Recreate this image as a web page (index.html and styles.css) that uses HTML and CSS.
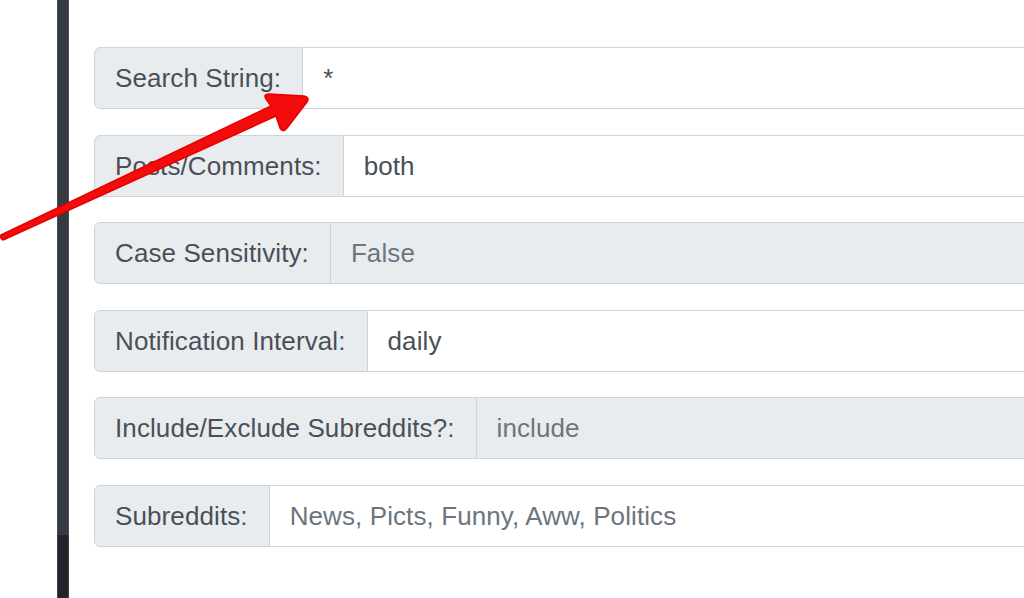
FILE: index.html
```html
<!DOCTYPE html>
<html>
<head>
<meta charset="utf-8">
<link rel="stylesheet" href="styles.css">
</head>
<body>
<div class="page">
  <div class="gutter"></div>
  <div class="sidebar"><div class="sidebar-top"></div><div class="sidebar-bottom"></div></div>
  <main class="main">
    <div class="group">
      <span class="label">Search String:</span>
      <span class="field">*</span>
    </div>
    <div class="group">
      <span class="label">Posts/Comments:</span>
      <span class="field">both</span>
    </div>
    <div class="group">
      <span class="label">Case Sensitivity:</span>
      <span class="field disabled">False</span>
    </div>
    <div class="group">
      <span class="label">Notification Interval:</span>
      <span class="field">daily</span>
    </div>
    <div class="group">
      <span class="label">Include/Exclude Subreddits?:</span>
      <span class="field disabled">include</span>
    </div>
    <div class="group">
      <span class="label">Subreddits:</span>
      <span class="field muted">News, Picts, Funny, Aww, Politics</span>
    </div>
  </main>
</div>
<svg class="arrow" width="320" height="250" viewBox="0 0 320 250">
  <path d="M1,235 L271,106 L266,99 Q263,94 269,94 L304,96 Q310,97 307,102 L287,128 Q283,133 280,128 L276,116 L3,240 Q0,239 1,235 Z" fill="#f20c0c" stroke="#e80000" stroke-width="1.5" stroke-linejoin="round"/>
</svg>
</body>
</html>
```

FILE: styles.css
```css
html, body {
  margin: 0;
  padding: 0;
  background: #ffffff;
  overflow: hidden;
}
body {
  width: 1024px;
  height: 598px;
  position: relative;
  font-family: "Liberation Sans", Arial, sans-serif;
}
.page {
  display: flex;
  height: 598px;
}
.gutter {
  width: 57px;
  flex: none;
}
.sidebar {
  width: 12px;
  flex: none;
  display: flex;
  flex-direction: column;
}
.sidebar-top {
  height: 535px;
  background: #343a40;
  border-left: 1px solid #4a5056;
  border-right: 1px solid #4a5056;
}
.sidebar-bottom {
  flex: 1;
  background: #212529;
  border-left: 1px solid #3a4046;
  border-right: 1px solid #3a4046;
}
.main {
  padding-left: 25px;
  padding-top: 47px;
  flex: none;
  width: 1000px;
}
.group {
  display: flex;
  height: 62px;
  margin-bottom: 25.6px;
  box-sizing: border-box;
  font-size: 26px;
  line-height: 60px;
  letter-spacing: 0.1px;
}
.label {
  flex: none;
  background: #e9ecef;
  color: #495057;
  border: 1px solid #ced4da;
  border-radius: 6px 0 0 6px;
  padding: 0 21px 0 20px;
  white-space: nowrap;
}
.field {
  flex: 1;
  background: #ffffff;
  color: #495057;
  border: 1px solid #ced4da;
  border-left: none;
  padding: 0 20px;
  white-space: nowrap;
}
.field.disabled {
  background: #e9ecef;
  color: #6c757d;
}
.field.muted {
  color: #6c757d;
}
.arrow {
  position: absolute;
  left: 0;
  top: 0;
}
```
